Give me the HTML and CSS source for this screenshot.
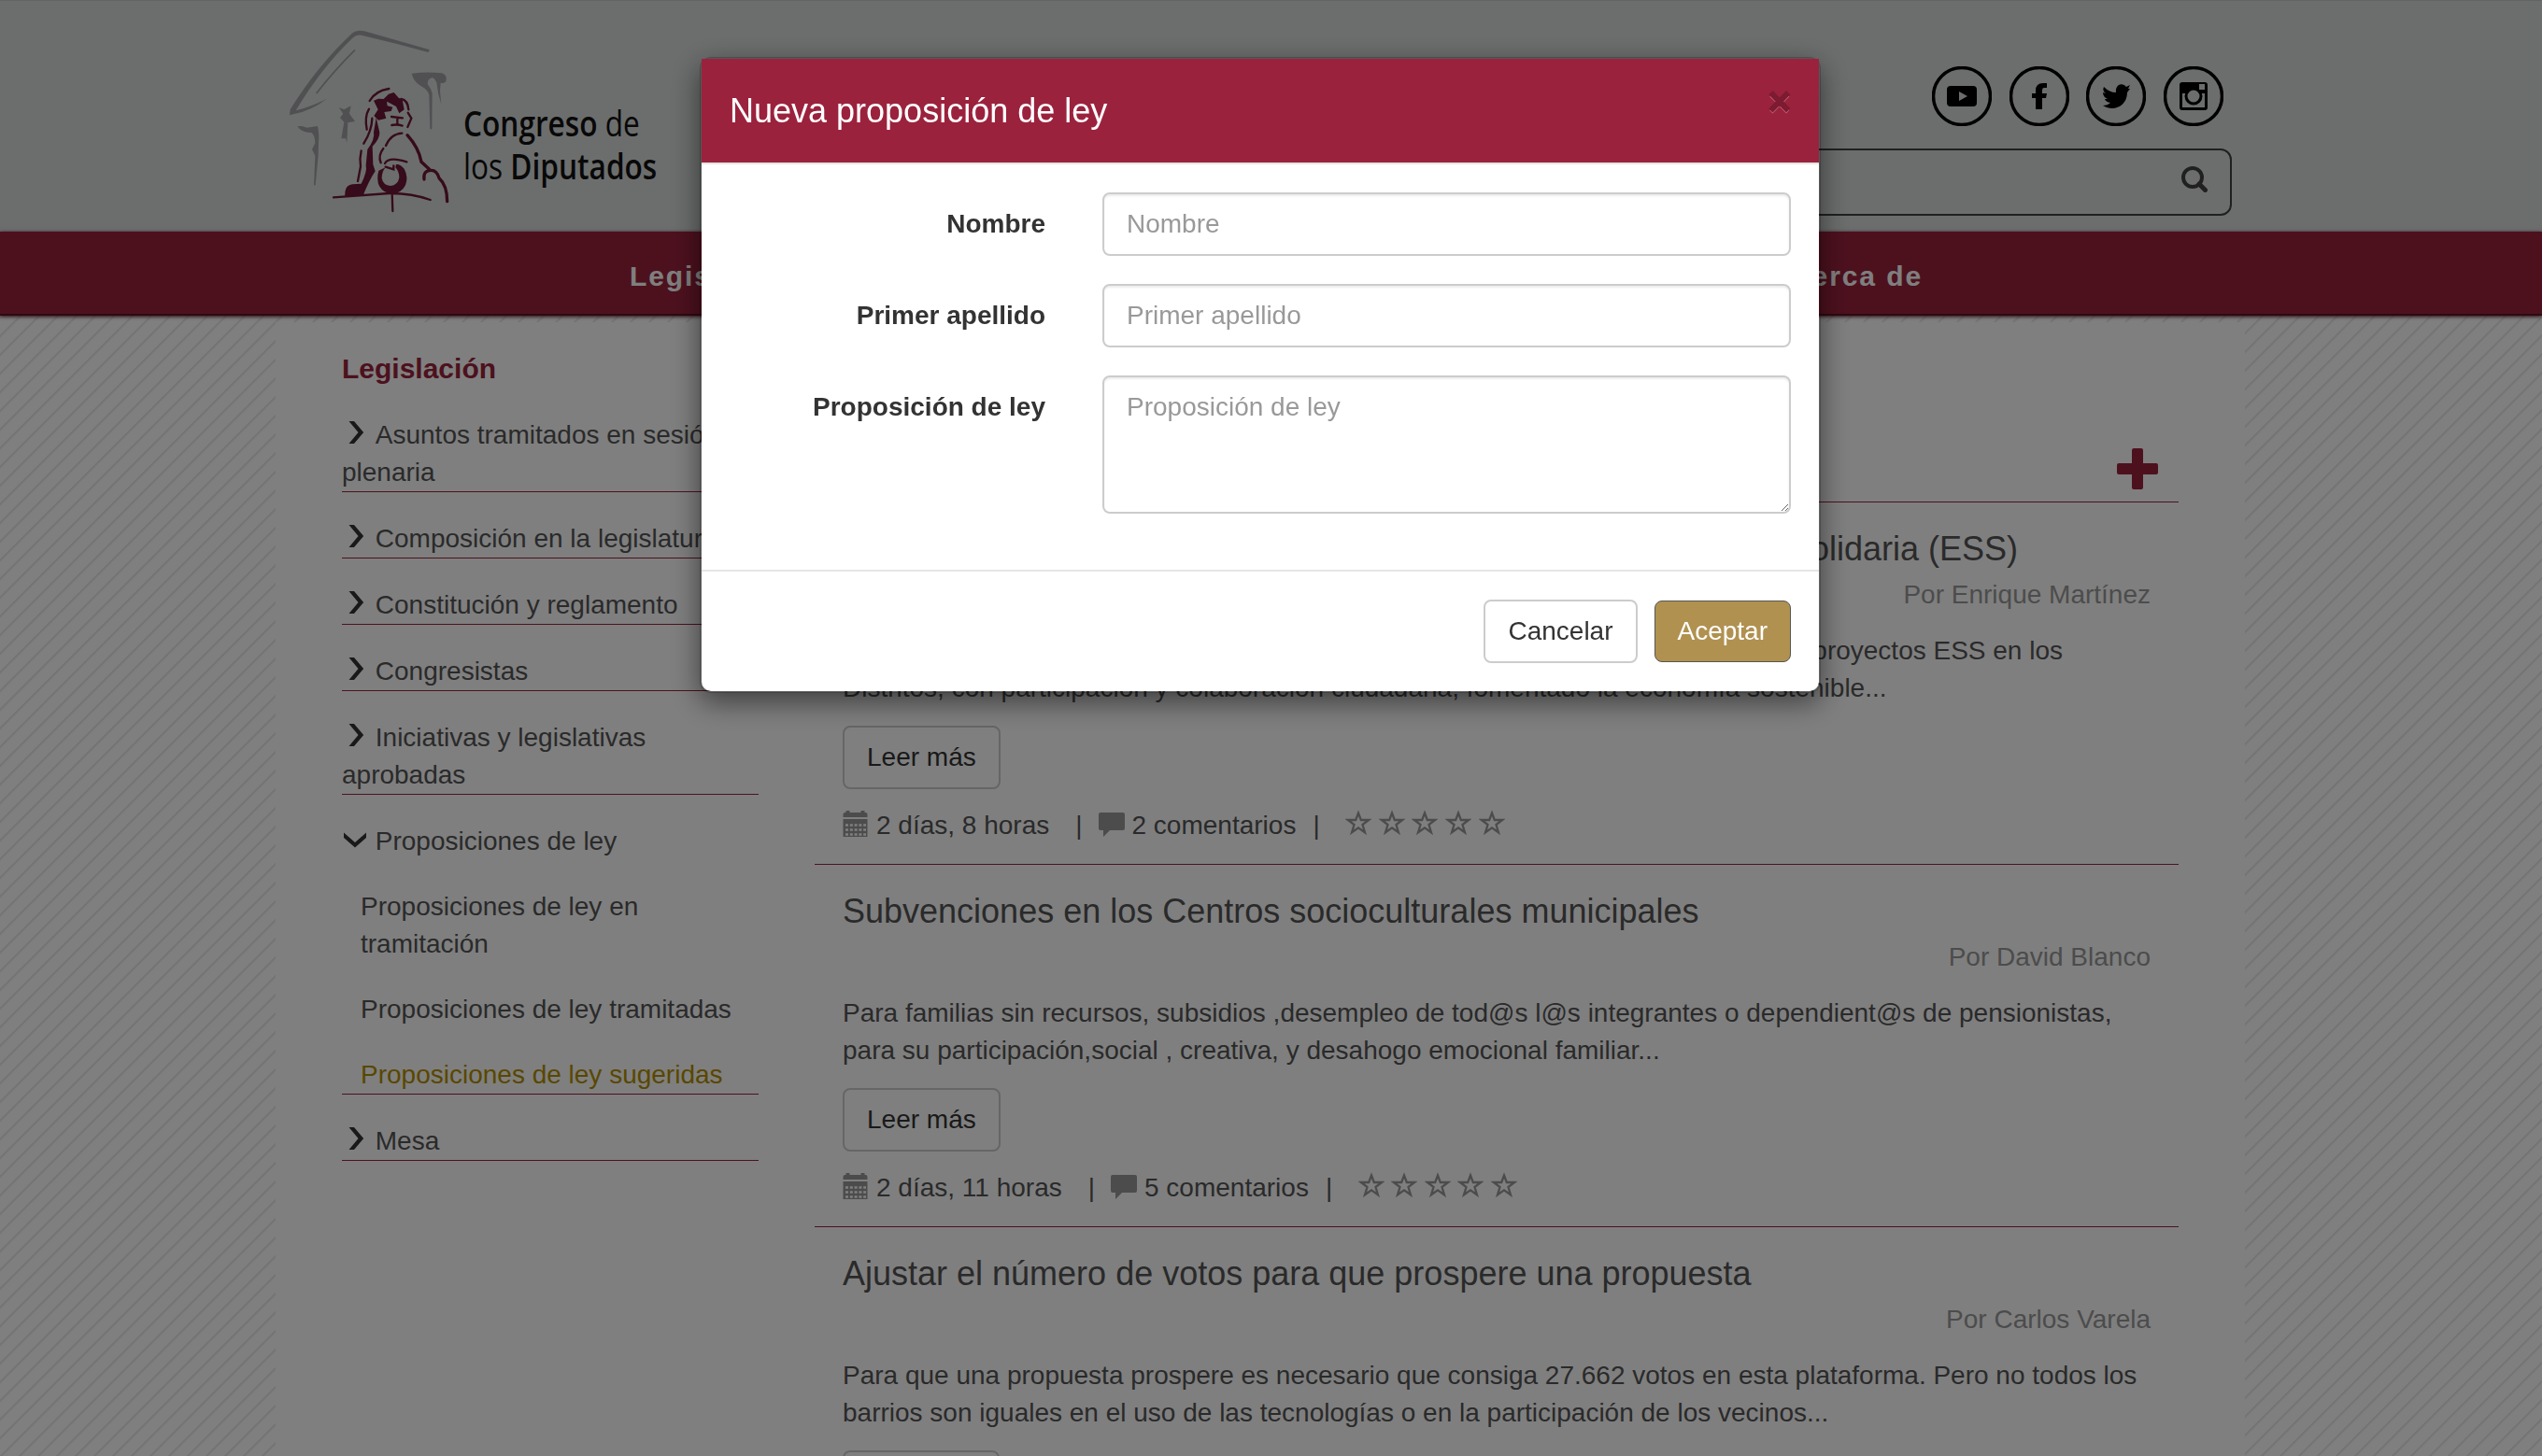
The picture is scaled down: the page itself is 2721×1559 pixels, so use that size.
FILE: index.html
```
<!DOCTYPE html>
<html lang="es">
<head>
<meta charset="utf-8">
<title>Congreso de los Diputados</title>
<link rel="stylesheet" href="styles.css">
</head>
<body>
<svg class="defs" width="0" height="0">
  <defs>
    <symbol id="chev" viewBox="0 0 28 28"><path d="M7.5 2h5.500L23.200 14 13 26H7.500L17.500 14z" fill="currentColor"/></symbol>
    <symbol id="chevd" viewBox="0 0 28 28"><path d="M2 13V7.500L14 18 26 7.500V13L14 23.500z" fill="currentColor"/></symbol>
    <symbol id="cal" viewBox="0 0 28 28"><path d="M.5 7V4q0-2 2-2h1V0h4v2h12V0h4v2h1q2 0 2 2v3zM.5 9h26v19H.500z" fill="currentColor"/><path d="M3 15.500h22M3 20.500h22M3 25.500h22" stroke="#fff" stroke-width="2.500" stroke-dasharray="3 1.800"/></symbol>
    <symbol id="com" viewBox="0 0 28 28"><path d="M2 2h24a2 2 0 0 1 2 2v15a2 2 0 0 1-2 2H12l-7 7v-7H2a2 2 0 0 1-2-2V4a2 2 0 0 1 2-2z" fill="currentColor"/></symbol>
    <symbol id="star" viewBox="0 0 28 28"><path d="M14 3.500 16.800 11H25L18.500 16 21 24.300 14 19.300 7 24.300 9.500 16 3 11H11.200z" fill="none" stroke="currentColor" stroke-width="2.300"/></symbol>
  </defs>
</svg>

<header class="top">
  <div class="brand">
    <svg class="emblem" viewBox="0 0 600 690" fill="none">
      <g fill="#a0a1a4">
        <path d="M60 340L62 322Q150 180 262 76 275 64 300 70L510 130 505 138Q400 108 290 83 275 80 262 92 160 190 80 325 130 312 180 287 130 325 75 336z"/>
        <path d="M452 206Q500 200 550 205 568 212 562 232 555 240 545 236L543 262 547 305Q535 270 532 235 520 208 505 228L503 240Q515 255 518 270L517 385H511L508 275Q505 258 480 245 458 232 452 206z"/>
        <path d="M218 315L235 322 257 310 252 335 270 360 247 364 244 428 240 415 226 415 235 362 222 348 232 335z"/>
        <path d="M85 376Q100 372 115 380L150 375Q156 400 153 430L152 470 143 565H138L142 470 132 450 142 430Q142 405 130 396 100 398 85 376z"/>
      </g>
      <path d="M270 130Q200 200 146 270" stroke="#a0a1a4" stroke-width="5"/>
      <g stroke="#6d1736" stroke-linecap="round" stroke-width="7">
        <path d="M317 294Q335 262 379 255M418 288Q440 292 442 322M440 332L451 350 439 378M387 345L423 349M406 349V368M388 372Q405 368 422 374"/>
        <path d="M315 320Q300 345 308 386M325 350Q324 390 298 431M290 454Q284 480 288 505L279 552"/>
        <path d="M421 398Q385 400 369 438M361 447Q343 470 353 493M366 495Q378 472 436 490M368 506L394 514V502"/>
        <path d="M438 404Q475 445 483 490L508 513M492 546Q488 517 515 517 533 517 540 542 566 565 566 617" stroke-width="10"/>
        <path d="M201 604L380 591Q450 590 512 612M389 592L391 648"/>
      </g>
      <g fill="#6d1736">
        <path d="M330 293L345 287 362 288 378 272 395 267 410 284 422 290 428 322 412 334 402 312 384 302 372 296 374 310 391 314 386 327 364 330 370 350 345 356 331 342 344 322z"/>
        <path d="M338 348L349 395Q350 415 326 440L328 498 335 520Q315 550 296 598L238 602Q235 565 262 562L290 560Q310 520 305 500L310 450Q335 415 330 395z"/>
        <path fill-rule="evenodd" d="M346 518Q338 545 348 568 362 592 390 592 420 590 432 565 442 538 428 512 415 496 402 498L400 508Q412 522 412 540 408 565 384 567 360 565 356 542 356 522 368 508z"/>
      </g>
    </svg>
    <div class="wordmark"><div><b>Congreso</b> de</div><div>los <b>Diputados</b></div></div>
  </div>
  <div class="tools">
    <div class="social">
      <svg viewBox="0 0 64 64"><circle cx="32" cy="32" r="30.500"/><rect class="f" x="16" y="21" width="32" height="22" rx="4"/><path class="bg" d="M29 27v10l9-5z"/></svg>
      <svg viewBox="0 0 64 64"><circle cx="32" cy="32" r="30.500"/><path class="f" d="M28 46V34h-4v-5h4v-3q0-8 8-8h4v5h-3q-2 0-2 3v3h5l-1 5h-4v12z"/></svg>
      <svg viewBox="0 0 64 64"><circle cx="32" cy="32" r="30.500"/><path class="f" d="M19 22q6 6 13 6c-1-9 7-11 11-6l4-2-2 4 2 0-3 4c0 15-15 21-26 14q5 0 8-3-5-1-6-4h3q-5-2-5-7l3 1q-4-3-2-7z"/></svg>
      <svg viewBox="0 0 64 64"><circle cx="32" cy="32" r="30.500"/><path class="f" fill-rule="evenodd" d="M20 17h24q3 0 3 3v24q0 3-3 3H20q-3 0-3-3V20q0-3 3-3zm0 12v15h24V29h-4a9 9 0 0 1-16 0zM38 19v6h6v-6z"/><circle class="bgc" cx="32" cy="32" r="8"/></svg>
    </div>
    <div class="search"><svg viewBox="0 0 28 28" fill="none" stroke="#414141"><circle cx="12" cy="12" r="10" stroke-width="4"/><path d="M19 19l6.500 6.500" stroke-width="5" stroke-linecap="round"/></svg></div>
  </div>
</header>
<nav class="nav"><span class="n1">Legislación</span><span class="n2">Acerca de</span></nav>

<main class="page">
  <aside class="side">
    <h2>Legislación</h2>
    <ul>
      <li><svg><use href="#chev"/></svg>Asuntos tramitados en sesión plenaria</li>
      <li><svg><use href="#chev"/></svg>Composición en la legislatura</li>
      <li><svg><use href="#chev"/></svg>Constitución y reglamento</li>
      <li><svg><use href="#chev"/></svg>Congresistas</li>
      <li><svg><use href="#chev"/></svg>Iniciativas y legislativas aprobadas</li>
      <li><svg><use href="#chevd"/></svg>Proposiciones de ley
        <div class="sub">Proposiciones de ley en tramitación</div>
        <div class="sub">Proposiciones de ley tramitadas</div>
        <div class="sub on">Proposiciones de ley sugeridas</div>
      </li>
      <li><svg><use href="#chev"/></svg>Mesa</li>
    </ul>
  </aside>
  <section class="content">
    <div class="bar"><svg viewBox="0 0 44 44"><path d="M16 2q0-2 2-2h8q2 0 2 2v14h14q2 0 2 2v8q0 2-2 2H28v14q0 2-2 2h-8q-2 0-2-2V28H2q-2 0-2-2v-8q0-2 2-2h14z" fill="#9b223d"/></svg></div>
    <article>
      <h3 class="lead-title">Fomento de los proyectos de Economía Social y Solidaria (ESS)</h3>
      <p class="by">Por Enrique Martínez</p>
      <div class="text">
        <p class="lead-line">Se propone crear una red municipal de apoyo y asesoramiento a los nuevos proyectos ESS en los</p>
        <p>Distritos, con participación y colaboración ciudadana, fomentado la economía sostenible...</p>
      </div>
      <span class="btn">Leer más</span>
      <div class="meta"><svg><use href="#cal"/></svg><span class="m1">2 días, 8 horas</span><span class="m2">|</span><svg><use href="#com"/></svg><span class="m3">2 comentarios</span><span class="m4">|</span><span class="stars"><svg><use href="#star"/></svg><svg><use href="#star"/></svg><svg><use href="#star"/></svg><svg><use href="#star"/></svg><svg><use href="#star"/></svg></span></div>
    </article>
    <article>
      <h3>Subvenciones en los Centros socioculturales municipales</h3>
      <p class="by">Por David Blanco</p>
      <p class="text">Para familias sin recursos, subsidios ,desempleo de tod@s l@s integrantes o dependient@s de pensionistas,<br>para su participación,social , creativa, y desahogo emocional familiar...</p>
      <span class="btn">Leer más</span>
      <div class="meta"><svg><use href="#cal"/></svg><span class="m1">2 días, 11 horas</span><span class="m2">|</span><svg><use href="#com"/></svg><span class="m3">5 comentarios</span><span class="m4">|</span><span class="stars"><svg><use href="#star"/></svg><svg><use href="#star"/></svg><svg><use href="#star"/></svg><svg><use href="#star"/></svg><svg><use href="#star"/></svg></span></div>
    </article>
    <article>
      <h3>Ajustar el número de votos para que prospere una propuesta</h3>
      <p class="by">Por Carlos Varela</p>
      <p class="text">Para que una propuesta prospere es necesario que consiga 27.662 votos en esta plataforma. Pero no todos los<br>barrios son iguales en el uso de las tecnologías o en la participación de los vecinos...</p>
      <span class="btn"></span>
    </article>
  </section>
</main>

<div class="backdrop">
  <div class="modal">
    <div class="mhead"><span>Nueva proposición de ley</span><span class="close">×</span></div>
    <div class="mbody">
      <label>Nombre</label><input placeholder="Nombre">
      <label>Primer apellido</label><input placeholder="Primer apellido">
      <label>Proposición de ley</label><textarea placeholder="Proposición de ley"></textarea>
    </div>
    <div class="mfoot"><span class="btn">Cancelar</span><span class="btn gold">Aceptar</span></div>
  </div>
</div>
</body>
</html>
```
FILE: styles.css
```
* { box-sizing: border-box; }
html, body { height: 1559px; overflow: hidden; }
body {
  margin: 0;
  font: 28px/40px "Liberation Sans", Arial, sans-serif;
  color: #555;
  background: #fff;
}
.defs { position: absolute; }
h2, h3, p, ul { margin: 0; padding: 0; font-weight: normal; }

.top {
  height: 248px;
  background: #d8dcda;
  padding: 0 332px 0 290px;
  display: flex;
  justify-content: space-between;
  border-top: 1px solid #c4c8c6;
}
.brand { display: flex; }
.emblem { width: 200px; height: 230px; margin-top: 9px; }
.wordmark { margin: 107px 0 0 6px; color: #111; font: 38px/46px "Open Sans", "Noto Sans", sans-serif; white-space: nowrap; }
.wordmark div { transform: scaleX(.832); transform-origin: 0 0; width: max-content; }
.wordmark b { font-weight: 600; }
.tools { width: 1200px; display: flex; flex-direction: column; align-items: flex-end; }
.social { display: flex; gap: 18.700px; margin: 70px 9px 0 0; }
.social svg { width: 64px; height: 64px; fill: none; stroke: #000; stroke-width: 3.500; }
.social .f { fill: #000; stroke: none; }
.social .bg { fill: #d8dcda; stroke: none; }
.social .bgc { fill: #d8dcda; stroke: #000; stroke-width: 3; }
.search {
  width: 1160px;
  height: 72px;
  margin-top: 24px;
  border: 2px solid #414141;
  border-radius: 12px;
  display: flex;
  justify-content: flex-end;
  padding: 17px 24px;
}
.search svg { width: 28px; height: 28px; }
.nav {
  height: 90px;
  background: #9b223d;
  border-bottom: 2px solid #5c1424;
  box-shadow: 0 1px 4px #50101f;
  position: relative;
  display: flex;
  color: #fff;
  font-weight: bold;
  font-size: 30px;
  letter-spacing: 1.9px;
  padding: 28px 0 0 674px;
  white-space: nowrap;
}
.n2 { width: max-content; margin-left: auto; margin-right: 663px; }

.page {
  display: flex;
  padding: 7px 317px 0 295px;
  background: linear-gradient(#fff, #fff) 295px 7px / 2108px 1300px no-repeat,
    repeating-linear-gradient(135deg, #fff 0, #ebebeb .7px 2.100px, #fff 3.200px 14.142px);
  height: 1221px;
  overflow: hidden;
}
.side { width: 517px; padding: 30px 0 0 71px; }
.side h2 { color: #9b223d; font-weight: bold; font-size: 30px; height: 41px; }
.side ul { list-style: none; width: 446px; }
.side li { border-bottom: 1px solid #9b223d; padding-top: 30px; }
.side li svg { width: 28px; height: 28px; color: #333; vertical-align: -2px; margin-right: 7.800px; }
.sub { padding: 30px 0 0 20px; }
.on { color: #b38f00; }
.content { width: 1460px; margin-left: 60px; }
.bar { height: 193px; border-bottom: 1px solid #9b223d; display: flex; justify-content: flex-end; padding: 135px 22px 0; }
.bar svg { width: 44px; height: 44px; }
article { border-bottom: 1px solid #9b223d; height: 388px; padding: 29px 30px 0; }
h3 { font-size: 36px; line-height: 42px; white-space: nowrap; }
.lead-title { width: 1258px; text-align: right; }
.by { color: #999; text-align: right; margin-top: 8px; }
.text { margin: 20px 0; white-space: nowrap; }
.lead-line { width: 1306px; text-align: right; }
.btn {
  display: inline-block;
  height: 68px;
  min-width: 168px;
  border: 2px solid #ccc;
  border-radius: 8px;
  padding: 12px 24px;
  color: #333;
  vertical-align: top;
}
.meta { display: flex; margin-top: 19px; white-space: pre; color: #555; }
.meta svg { width: 28px; height: 28px; color: #999; margin-top: 4px; }
.m1 { margin-left: 8px; }
.m2 { margin: 0 17px 0 28px; }
.m3 { margin-left: 8px; }
.m4 { margin-left: 18px; }
.stars { display: flex; gap: 7.600px; margin-left: 27.500px; }
.meta .stars svg { margin-top: 3px; }

.backdrop {
  position: fixed;
  inset: 0;
  background: rgba(0, 0, 0, .5);
  padding: 61px 0 0 749px;
}
.modal {
  width: 1200px;
  height: 681px;
  border: 2px solid rgba(0, 0, 0, .2);
  border-radius: 12px;
  background: #fff;
  background-clip: padding-box;
  box-shadow: 0 10px 30px rgba(0, 0, 0, .5);
  color: #333;
}
.mhead {
  height: 113px;
  border-bottom: 2px solid #e5e5e5;
  background: #9b223d;
  color: #fff;
  font-size: 36px;
  line-height: 52px;
  padding: 30px 30px;
  display: flex;
  justify-content: space-between;
}
.close { color: #7c1b31; font: bold 42px/42px "Liberation Sans", sans-serif; -webkit-text-stroke: 1.500px #7c1b31; text-shadow: 0 2px 0 #c36a7c; margin-top: -5px; }
.mbody {
  display: grid;
  grid-template-columns: 368px 737px;
  column-gap: 61px;
  row-gap: 30px;
  padding: 30px 0 0;
  height: 434px;
  align-content: start;
}
.mbody label { text-align: right; font-weight: bold; padding-top: 14px; }
.mbody input, .mbody textarea {
  font: 28px/40px "Liberation Sans", Arial, sans-serif;
  border: 2px solid #ccc;
  border-radius: 8px;
  height: 68px;
  padding: 12px 24px;
  box-shadow: inset 0 2px 2px rgba(0, 0, 0, .075);
  width: 737px;
  margin: 0;
  outline: 0;
}
.mbody textarea { height: 148px; }
.mbody ::placeholder { color: #999; }
.mfoot {
  border-top: 2px solid #e5e5e5;
  padding: 30px;
  display: flex;
  justify-content: flex-end;
  gap: 18px;
}
.mfoot .btn { min-width: 0; }
.mfoot .gold { background: #b09150; color: #fff; border: 1px solid #555; height: 66px; margin-top: 1px; }
```
